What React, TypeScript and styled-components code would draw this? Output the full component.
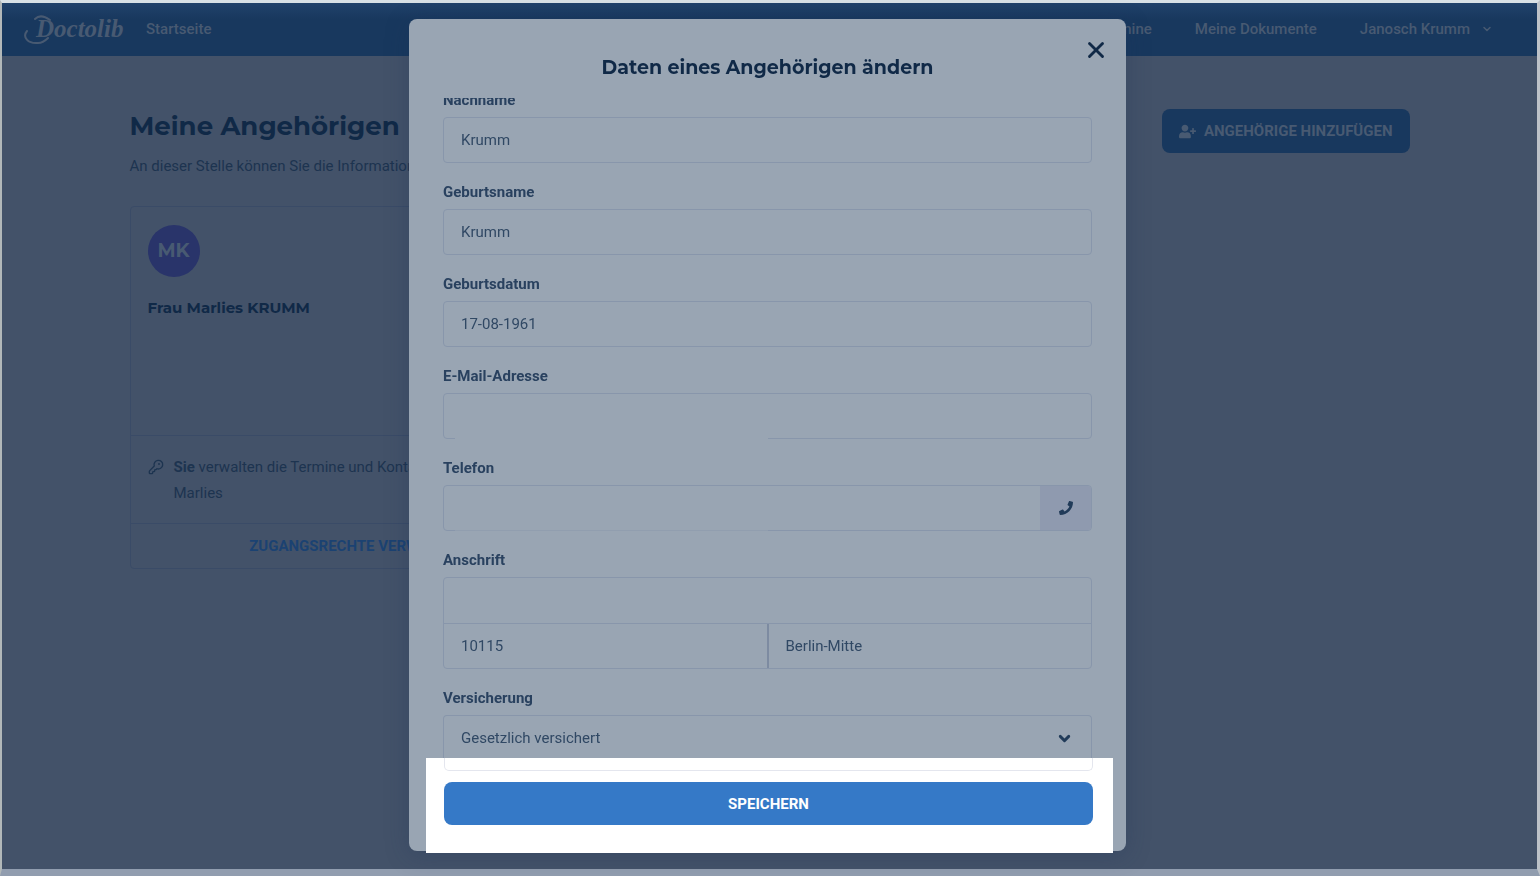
import React from "react";
import styled, { createGlobalStyle } from "styled-components";
import { KeyRound, ChevronDown, X } from "lucide-react";
import { FaPhone, FaUserPlus } from "react-icons/fa";

const color = {
  page: "#435269",
  nav: "#18385e",
  navText: "#485a72",
  navy: "#102947",
  body: "#1d3450",
  line: "#3a4b67",
  link: "#1b4272",
  avatar: "#29346a",
  panel: "#99a5b3",
  fieldLine: "#8896ab",
  label: "#29415f",
  value: "#304864",
  primary: "#3579c7",
};

const heading = `Montserrat, Inter, "Open Sans", sans-serif`;

const GlobalStyle = createGlobalStyle`
  *, *::before, *::after { box-sizing: border-box; }
  html, body { margin: 0; overflow: hidden; }
  body { font: 400 15px/20px Roboto, "Liberation Sans", sans-serif; color: ${color.body}; }
  button, input, select { font: inherit; color: inherit; margin: 0; }
  h1, h2, h3, p { margin: 0; }
`;

const Frame = styled.div`
  display: flex;
  flex-direction: column;
  min-height: 100vh;
  background: ${color.page};
  border-style: solid;
  border-width: 3px 3px 7px 2px;
  border-color: #d9e1e6 #bdc2c8 #919daf #b2b8b9;
`;

const Nav = styled.nav`
  display: flex;
  align-items: center;
  height: 53px;
  padding: 0 44px 1px 22px;
  background: linear-gradient(#21426b, ${color.nav} 16px);
  color: ${color.navText};
  font-weight: 500;
`;

const Logo = styled.a`
  position: relative;
  width: 98px;
  margin-right: 24px;
  color: inherit;
  text-decoration: none;
  font: italic 700 25px/36px "Liberation Serif", serif;
  padding-left: 12px;
`;

const Swash = styled.svg`
  position: absolute;
  left: 0;
  top: 2px;
`;

const NavLink = styled.a`
  color: inherit;
  text-decoration: none;
`;

const NavRight = styled.div`
  display: flex;
  align-items: center;
  gap: 43px;
  margin-left: auto;
`;

const Account = styled.button`
  display: flex;
  align-items: center;
  gap: 11px;
  padding: 0;
  border: 0;
  background: none;
  font-weight: 500;
`;

const Main = styled.main`
  width: 100%;
  max-width: 1280px;
  margin: 0 auto;
  padding-top: 53px;
`;

const PageHead = styled.header`
  display: flex;
  justify-content: space-between;
  align-items: flex-start;
`;

const PageTitle = styled.h1`
  font: 700 26px/34px ${heading};
  color: ${color.navy};
`;

const Intro = styled.p`
  margin-top: 13px;
  line-height: 20px;
`;

const AddButton = styled.button`
  display: flex;
  align-items: center;
  gap: 8px;
  height: 44px;
  padding: 0 17px;
  border: 0;
  border-radius: 8px;
  background: ${color.nav};
  color: ${color.navText};
  font-weight: 700;
`;

const Card = styled.article`
  width: 454px;
  margin-top: 30px;
  border: 1px solid ${color.line};
  border-radius: 4px;
`;

const CardTop = styled.div`
  height: 228px;
  padding: 18px 17px;
`;

const Avatar = styled.div`
  display: grid;
  place-items: center;
  width: 52px;
  height: 52px;
  border-radius: 50%;
  background: ${color.avatar};
  color: ${color.navText};
  font: 700 19px/24px ${heading};
`;

const PersonName = styled.h3`
  margin-top: 21px;
  font: 700 15px/20px ${heading};
  color: ${color.navy};
`;

const CardNote = styled.div`
  display: flex;
  gap: 10px;
  padding: 18px 17px 17px;
  border-top: 1px solid ${color.line};
  line-height: 26px;

  svg { flex: none; margin-top: 5px; }
`;

const CardAction = styled.button`
  display: block;
  width: 100%;
  height: 45px;
  padding: 0;
  border: 0;
  border-top: 1px solid ${color.line};
  background: none;
  color: ${color.link};
  font-weight: 700;
`;

const Backdrop = styled.div`
  position: fixed;
  inset: 19px 5px auto 0;
  display: flex;
  justify-content: center;
`;

const Dialog = styled.section`
  position: relative;
  width: 717px;
  max-width: 100%;
  border-radius: 8px;
  background: ${color.panel};
  box-shadow: 0 4px 24px rgba(30, 50, 85, 0.3);
`;

const DialogHead = styled.header`
  padding: 37px 34px 18px;
  text-align: center;
`;

const DialogTitle = styled.h2`
  font: 700 19px/24px ${heading};
  color: ${color.navy};
`;

const Close = styled.button`
  position: absolute;
  top: 18px;
  right: 17px;
  display: grid;
  padding: 0;
  border: 0;
  background: none;
  color: ${color.navy};
`;

const Scroller = styled.div`
  overflow: hidden;
  padding: 0 34px;
`;

const Fields = styled.div`
  display: flex;
  flex-direction: column;
  gap: 19px;
  margin-top: -8px;
`;

const Field = styled.div`
  display: flex;
  flex-direction: column;
  gap: 7px;
`;

const Label = styled.label`
  line-height: 20px;
  font-weight: 700;
  color: ${color.label};
`;

const Box = styled.div<{ $blank?: string }>`
  position: relative;
  display: flex;
  height: 46px;
  border: 1px solid ${color.fieldLine};
  border-radius: 4px;

  ${(p) =>
    p.$blank &&
    `
    &::after {
      content: "";
      position: absolute;
      left: 11px;
      right: 50%;
      bottom: -1px;
      height: 1px;
      background: ${p.$blank};
    }
  `}
`;

const Input = styled.input`
  flex: 1;
  min-width: 0;
  padding: 0 17px;
  border: 0;
  outline: 0;
  background: none;
  color: ${color.value};
`;

const PhoneAddon = styled.span`
  display: grid;
  place-items: center;
  width: 51px;
  border-radius: 0 3px 3px 0;
  background: #8f9aaf;
  color: #213b59;
`;

const Address = styled.div`
  border: 1px solid ${color.fieldLine};
  border-radius: 4px;
`;

const AddressRow = styled.div<{ $second?: boolean }>`
  display: flex;
  height: 45px;
  border-top: ${(p) => (p.$second ? `1px solid ${color.fieldLine}` : "0")};

  input + input { border-left: 2px solid #7d8ba1; }
`;

const SelectBox = styled.div`
  position: relative;
  height: 43px;
  border: 1px solid ${color.fieldLine};
  border-bottom: 0;
  border-radius: 4px 4px 0 0;

  svg {
    position: absolute;
    right: 18px;
    top: 14px;
    color: #213b59;
    pointer-events: none;
  }
`;

const Select = styled.select`
  appearance: none;
  width: 100%;
  height: 44px;
  padding: 0 17px;
  border: 0;
  outline: 0;
  background: none;
  color: ${color.value};
`;

const Spotlight = styled.footer`
  position: relative;
  margin: 0 13px -2px 17px;
  padding: 0 20px 28px 18px;
  background: #fff;
`;

const SelectTail = styled.div`
  height: 13px;
  margin-bottom: 11px;
  border: 1px solid #e4e6ee;
  border-top: 0;
  border-radius: 0 0 5px 5px;
`;

const Save = styled.button`
  display: block;
  width: 100%;
  height: 43px;
  border: 0;
  border-radius: 8px;
  background: ${color.primary};
  color: #fff;
  font-weight: 700;
`;

const fields = [
  { id: "nachname", label: "Nachname", value: "Krumm" },
  { id: "geburtsname", label: "Geburtsname", value: "Krumm" },
  { id: "geburtsdatum", label: "Geburtsdatum", value: "17-08-1961" },
];

export default function App() {
  return (
    <>
      <GlobalStyle />
      <Frame>
        <Nav>
          <Logo href="#">
            <Swash width="34" height="34" viewBox="0 0 34 34" fill="none" stroke="currentColor" strokeLinecap="round" aria-hidden="true">
              <path d="M3 18C-2 24 4 31 14 30C18 30 21 28 24 25" strokeWidth="2" />
              <path d="M11 6C14 3 19 2 26 7" strokeWidth="2" />
            </Swash>
            Doctolib
          </Logo>
          <NavLink href="#">Startseite</NavLink>
          <NavRight>
            <NavLink href="#">Meine Termine</NavLink>
            <NavLink href="#">Meine Dokumente</NavLink>
            <Account type="button">
              Janosch Krumm
              <ChevronDown size={12} strokeWidth={3} />
            </Account>
          </NavRight>
        </Nav>
        <Main>
          <PageHead>
            <div>
              <PageTitle>Meine Angehörigen</PageTitle>
              <Intro>An dieser Stelle können Sie die Informationen verwalten.</Intro>
            </div>
            <AddButton type="button">
              <FaUserPlus size={17} />
              ANGEHÖRIGE HINZUFÜGEN
            </AddButton>
          </PageHead>
          <Card>
            <CardTop>
              <Avatar>MK</Avatar>
              <PersonName>Frau Marlies KRUMM</PersonName>
            </CardTop>
            <CardNote>
              <KeyRound size={16} strokeWidth={2} />
              <p>
                <b>Sie</b> verwalten die Termine und Kontaktdaten von
                <br />
                Marlies
              </p>
            </CardNote>
            <CardAction type="button">ZUGANGSRECHTE VERWALTEN</CardAction>
          </Card>
        </Main>
      </Frame>

      <Backdrop>
        <Dialog role="dialog" aria-labelledby="dialog-title">
          <DialogHead>
            <DialogTitle id="dialog-title">Daten eines Angehörigen ändern</DialogTitle>
            <Close type="button" aria-label="Schließen">
              <X size={26} strokeWidth={2.6} />
            </Close>
          </DialogHead>
          <Scroller>
            <Fields>
              {fields.map((f) => (
                <Field key={f.id}>
                  <Label htmlFor={f.id}>{f.label}</Label>
                  <Box>
                    <Input id={f.id} defaultValue={f.value} />
                  </Box>
                </Field>
              ))}
              <Field>
                <Label htmlFor="email">E-Mail-Adresse</Label>
                <Box $blank={color.panel}>
                  <Input id="email" type="email" />
                </Box>
              </Field>
              <Field>
                <Label htmlFor="telefon">Telefon</Label>
                <Box $blank="#919eaf">
                  <Input id="telefon" type="tel" />
                  <PhoneAddon>
                    <FaPhone size={14} />
                  </PhoneAddon>
                </Box>
              </Field>
              <Field>
                <Label htmlFor="anschrift">Anschrift</Label>
                <Address>
                  <AddressRow>
                    <Input id="anschrift" />
                  </AddressRow>
                  <AddressRow $second>
                    <Input aria-label="Postleitzahl" defaultValue="10115" />
                    <Input aria-label="Ort" defaultValue="Berlin-Mitte" />
                  </AddressRow>
                </Address>
              </Field>
              <Field>
                <Label htmlFor="versicherung">Versicherung</Label>
                <SelectBox>
                  <Select id="versicherung">
                    <option>Gesetzlich versichert</option>
                  </Select>
                  <ChevronDown size={17} strokeWidth={4} />
                </SelectBox>
              </Field>
            </Fields>
          </Scroller>
          <Spotlight>
            <SelectTail />
            <Save type="button">SPEICHERN</Save>
          </Spotlight>
        </Dialog>
      </Backdrop>
    </>
  );
}
